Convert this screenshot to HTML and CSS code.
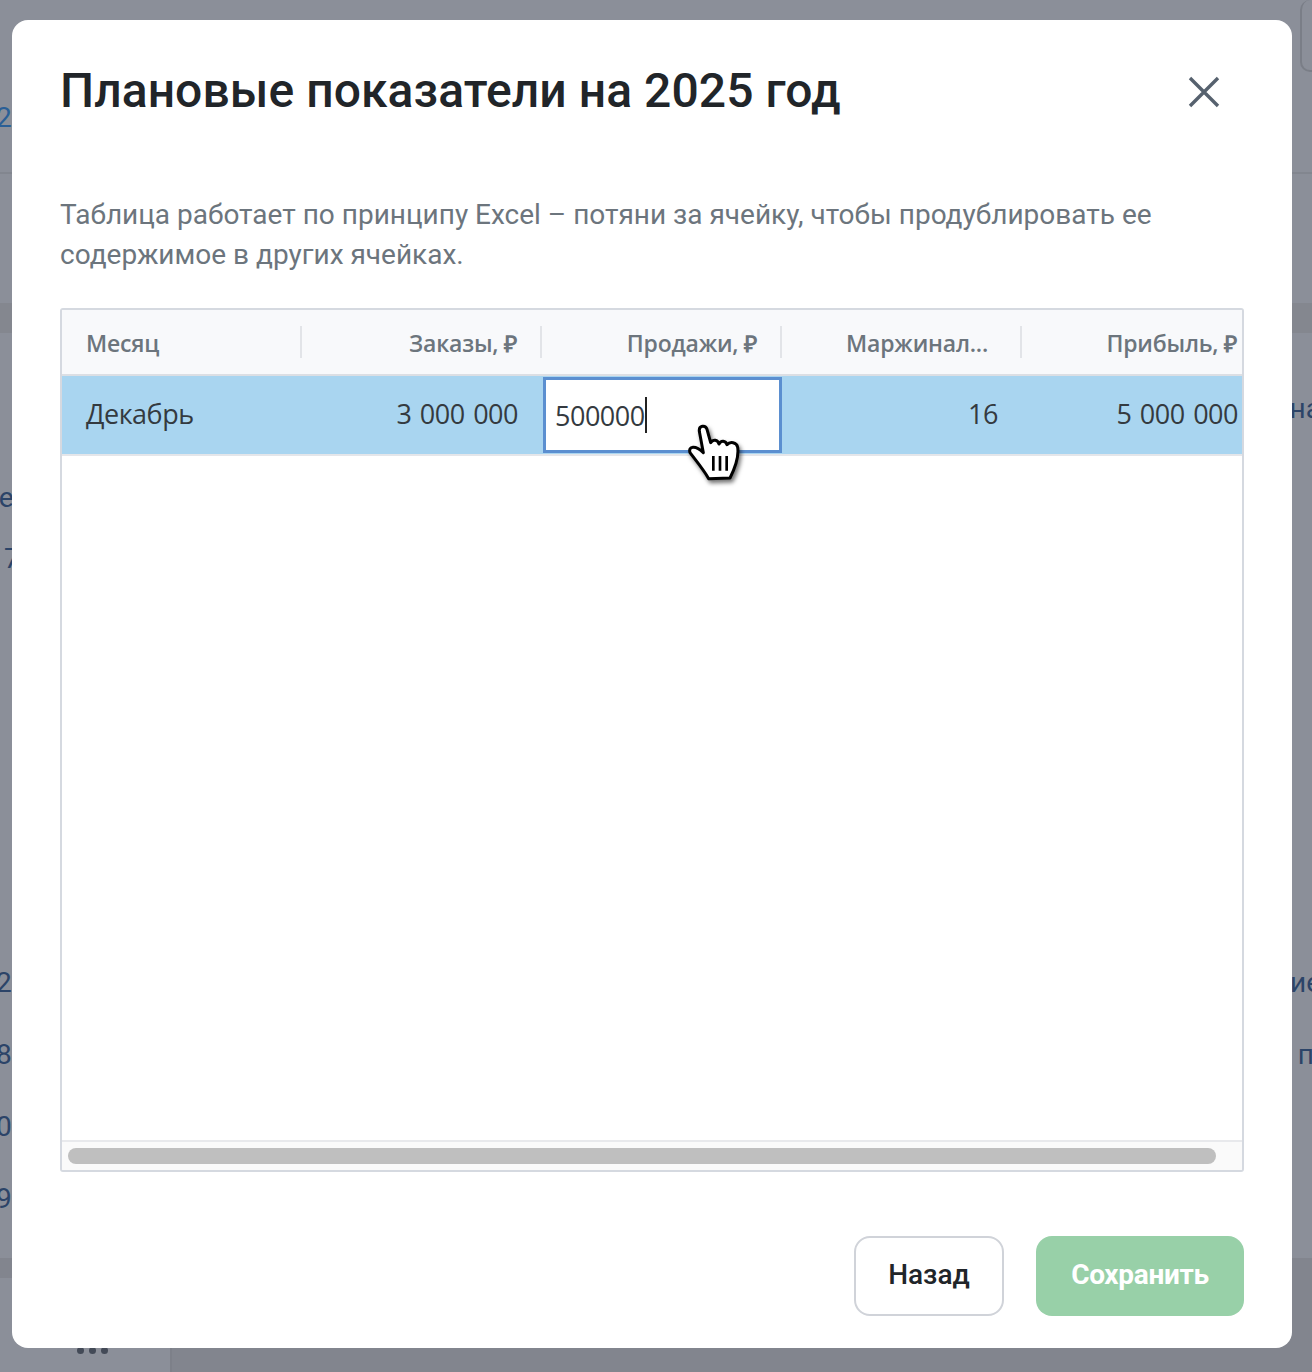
FILE: index.html
```html
<!DOCTYPE html>
<html lang="en">
<head>
    <meta charset="UTF-8">
    <meta name="viewport" content="width=device-width, initial-scale=1.0">
    <title>Плановые показатели</title>
    <link rel="stylesheet" href="styles.css">
</head>
<body>
    <div class="pageClass">
        <div class="bgTopClass">
            <span class="bgLinkClass">2</span>
            <div class="bgBoxClass"></div>
        </div>
        <div class="bgBandClass"></div>
        <div class="bgRowClass bgRowFirstClass"><span></span><span class="bgRightClass">на</span></div>
        <div class="bgRowClass bgRowSecondClass"><span>се</span><span></span></div>
        <div class="bgRowClass bgRowThirdClass"><span class="bgSevenClass">7</span><span></span></div>
        <div class="bgRowClass bgRowFourthClass"><span>2</span><span class="bgRightClass">ие</span></div>
        <div class="bgRowClass"><span>8</span><span class="bgRightClass bgFarClass">п</span></div>
        <div class="bgRowClass"><span>0</span><span></span></div>
        <div class="bgRowClass"><span>9</span><span></span></div>
        <div class="bgStripClass"></div>
        <div class="bgBottomClass">
            <div class="bgSideClass"><span class="dotClass"></span><span class="dotClass"></span><span class="dotClass"></span></div>
        </div>
    </div>

    <div class="modalClass">
        <div class="modalHeadClass">
            <h1 class="modalTitleClass">Плановые показатели на 2025 год</h1>
            <svg class="closeIconClass" viewBox="0 0 32 32" width="32" height="32">
                <path d="M2 2 L30 30 M30 2 L2 30" fill="none" stroke="#56616e" stroke-width="3.4"/>
            </svg>
        </div>
        <p class="modalTextClass">Таблица работает по принципу Excel – потяни за ячейку, чтобы продублировать ее содержимое в других ячейках.</p>

        <div class="tableClass">
            <div class="tableHeadClass">
                <div class="headCellClass leftCellClass">Месяц</div>
                <div class="headCellClass">Заказы, ₽</div>
                <div class="headCellClass">Продажи, ₽</div>
                <div class="headCellClass headCutClass">Маржинал...</div>
                <div class="headCellClass">Прибыль, ₽</div>
            </div>
            <div class="tableRowClass">
                <div class="cellClass leftCellClass">Декабрь</div>
                <div class="cellClass">3 000 000</div>
                <div class="editCellClass">500000<span class="caretClass"></span></div>
                <div class="cellClass">16</div>
                <div class="cellClass">5 000 000</div>
            </div>
            <div class="tableBodyClass"></div>
            <div class="scrollClass"><div class="scrollThumbClass"></div></div>
        </div>

        <div class="modalFootClass">
            <button class="backButtonClass">Назад</button>
            <button class="saveButtonClass">Сохранить</button>
        </div>
    </div>

    <svg class="cursorClass" viewBox="0 0 270 240" width="90" height="80">
        <path d="M88 64 C86 46 106 44 111 58 L122 98 C130 86 143 90 147 102 C153 90 167 92 171 104 C180 94 200 96 203 112 C207 138 198 168 180 204 L116 206 C100 178 78 152 60 128 C54 108 76 104 100 128 Z" fill="#fff" stroke="#000" stroke-width="9" stroke-linejoin="round"/>
        <path d="M130 138 V182 M150 138 V182 M170 138 V182" fill="none" stroke="#000" stroke-width="8"/>
    </svg>
</body>
</html>
```

FILE: styles.css
```css
html, body{
    margin: 0;
    padding: 0;
}
body{
    width: 1312px;
    height: 1372px;
    overflow: hidden;
    font-family: "Roboto", "Liberation Sans", sans-serif;
}
.pageClass{
    height: 1372px;
    display: flex;
    flex-direction: column;
    background: #8b8f99;
    color: #2c4468;
    font-size: 28px;
}
.bgTopClass{
    height: 174px;
    box-sizing: border-box;
    border-bottom: 2px solid #82868f;
    display: flex;
    justify-content: space-between;
}
.bgLinkClass{
    margin-top: 101px;
    margin-left: -4px;
    color: #2b5f96;
}
.bgBoxClass{
    width: 24px;
    height: 72px;
    box-sizing: border-box;
    margin-right: -12px;
    border: 2px solid #7a7e87;
    border-radius: 10px;
    border-top: 0;
}
.bgBandClass{
    height: 30px;
    margin-top: 129px;
    background: #84878f;
}
.bgRowClass{
    height: 72px;
    display: flex;
    justify-content: space-between;
    align-items: center;
    margin-left: -4px;
    margin-right: -12px;
}
.bgRowFirstClass{
    margin-top: 39px;
}
.bgRowSecondClass{
    margin-top: 17px;
    margin-left: -16px;
}
.bgRowThirdClass{
    margin-top: -11px;
}
.bgRowFourthClass{
    margin-top: 352px;
}
.bgSevenClass{
    margin-left: 8px;
}
.bgRightClass{
    margin-right: 3px;
}
.bgFarClass{
    margin-right: 10px;
}
.bgStripClass{
    height: 20px;
    margin-top: 24px;
    background: #82858e;
}
.bgBottomClass{
    flex: 1;
    display: flex;
    background: #82858e;
    align-items: flex-end;
}
.bgSideClass{
    width: 172px;
    height: 94px;
    box-sizing: border-box;
    padding-top: 69px;
    padding-left: 77px;
    display: flex;
    gap: 5px;
    background: #8b8f99;
    border-right: 2px solid #7d8089;
}
.dotClass{
    width: 7px;
    height: 7px;
    border-radius: 50%;
    background: #434a57;
}

.modalClass{
    position: absolute;
    left: 12px;
    top: 20px;
    width: 1280px;
    height: 1328px;
    box-sizing: border-box;
    padding: 0 48px;
    display: flex;
    flex-direction: column;
    background: #fff;
    border-radius: 16px;
}
.modalHeadClass{
    height: 144px;
    display: flex;
    justify-content: space-between;
    align-items: center;
}
.modalTitleClass{
    margin: 0 0 3px;
    font-size: 48px;
    font-weight: 500;
    letter-spacing: 0.07px;
    color: #212529;
}
.closeIconClass{
    margin-right: 24px;
}
.modalTextClass{
    margin: 31px 0 33px;
    font-size: 28px;
    line-height: 40px;
    color: #6c757d;
}
.tableClass{
    height: 864px;
    box-sizing: border-box;
    display: flex;
    flex-direction: column;
    border: 2px solid #d5d9e0;
    border-radius: 3px;
    overflow: hidden;
    font-family: "Open Sans", "Liberation Sans", sans-serif;
}
.tableHeadClass, .tableRowClass{
    display: grid;
    grid-template-columns: repeat(5, 240px);
    flex: none;
}
.tableHeadClass{
    height: 66px;
    box-sizing: border-box;
    align-items: center;
    background: #f8f9fb;
    border-bottom: 2px solid #dcdfe4;
}
.headCellClass{
    height: 32px;
    line-height: 34px;
    padding: 0 23px 0 24px;
    box-sizing: border-box;
    text-align: right;
    font-size: 23px;
    font-weight: 600;
    letter-spacing: -0.2px;
    color: #6c757d;
    border-right: 2px solid #e2e4e8;
}
.headCutClass{
    padding-right: 32px;
}
.leftCellClass{
    text-align: left;
}
.tableRowClass{
    height: 80px;
    box-sizing: border-box;
    align-items: center;
    background: #a9d5f0;
    border-bottom: 2px solid #e4e6ea;
}
.cellClass{
    padding: 0 24px 4px;
    text-align: right;
    font-size: 27px;
    letter-spacing: -0.5px;
    word-spacing: 2px;
    color: #343a40;
}
.cellClass.leftCellClass{
    text-align: left;
}
.editCellClass{
    height: 76px;
    box-sizing: border-box;
    margin: 0 0 0 1px;
    padding-left: 9px;
    display: flex;
    align-items: center;
    background: #fff;
    border: 3px solid #5b8fd0;
    font-size: 27px;
    letter-spacing: -0.5px;
    color: #343a40;
}
.caretClass{
    width: 2px;
    height: 36px;
    background: #222;
}
.tableBodyClass{
    flex: 1;
    background: #fff;
}
.scrollClass{
    height: 30px;
    flex: none;
    box-sizing: border-box;
    padding: 6px 26px 6px 6px;
    background: #fafafa;
    border-top: 2px solid #e8e9ec;
}
.scrollThumbClass{
    height: 16px;
    border-radius: 8px;
    background: #bfbfbf;
}
.modalFootClass{
    margin-top: 64px;
    display: flex;
    justify-content: flex-end;
    gap: 32px;
}
.backButtonClass, .saveButtonClass{
    height: 80px;
    box-sizing: border-box;
    padding-bottom: 4px;
    border-radius: 16px;
    font-family: "Roboto", "Liberation Sans", sans-serif;
    font-size: 28px;
    font-weight: 500;
}
.backButtonClass{
    width: 150px;
    background: #fff;
    border: 2px solid #d0d3d9;
    color: #212529;
}
.saveButtonClass{
    width: 208px;
    background: #98d0a8;
    border: 0;
    font-weight: 700;
    letter-spacing: -0.3px;
    color: #fff;
}
.cursorClass{
    position: absolute;
    left: 670px;
    top: 410px;
    filter: drop-shadow(2px 3px 2px rgba(0,0,0,0.55));
}
```
